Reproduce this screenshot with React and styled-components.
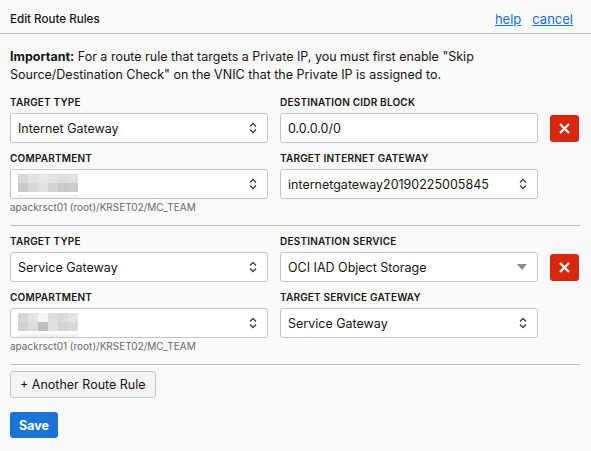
import styled, { createGlobalStyle } from "styled-components";

const Global = createGlobalStyle`
  html, body {
    margin: 0;
    background: #f9f9f9;
  }
  body {
    font-family: Inter, "Liberation Sans", sans-serif;
    color: #161513;
  }
`

const Header = styled.div`
  height: 34px;
  box-sizing: border-box;
  display: flex;
  align-items: center;
  justify-content: space-between;
  padding: 4px 18px 0 10px;
  border-bottom: 1px solid #b9bcc4;
`
const Title = styled.h2`
  margin: 0;
  font-size: 11.6px;
  font-weight: 500;
`
const Links = styled.div`
  display: flex;
  gap: 11px;
`
const Link = styled.a`
  font-size: 13px;
  color: #1a6fd6;
  text-decoration: underline;
  cursor: pointer;
`
const Body = styled.div`
  padding: 0 11px 0 10px;
`
const Notice = styled.p`
  margin: 0;
  padding: 14px 0 3px;
  font-size: 12.5px;
  line-height: 18px;
`
const Rule = styled.div`
  display: grid;
  grid-template-columns: 258px 258px 29px;
  column-gap: 12px;
  padding: 9px 0 12px;
  border-bottom: 1px solid #b9bcc4;
`
const Field = styled.div`
  display: flex;
  flex-direction: column;
  margin-bottom: ${p => (p.$last ? "0" : "9px")};
`
const Label = styled.label`
  font-size: 10px;
  font-weight: 600;
  line-height: 12px;
  letter-spacing: 0.2px;
  margin-bottom: 5px;
`
const SelectBox = styled.div`
  height: 30px;
  box-sizing: border-box;
  border: 1px solid #c2c4c9;
  border-radius: 3px;
  background: #fff;
  display: flex;
  align-items: center;
  justify-content: space-between;
  padding: 0 10px 0 7px;
  font-size: 12.5px;
`
const Hint = styled.div`
  font-size: 10px;
  color: #6b6b6b;
  line-height: 12px;
  margin-top: 2px;
`
const DeleteButton = styled.button`
  width: 29px;
  height: 27px;
  margin-top: 19px;
  border: none;
  border-radius: 3px;
  background: #d8270e;
  display: flex;
  align-items: center;
  justify-content: center;
  padding: 0;
`
const Blur = styled.div`
  display: grid;
  grid-template-columns: repeat(6, 10px);
  grid-auto-rows: 9px;
  padding-bottom: 3px;
  box-shadow: 0 3px 0 #f1f1f1;
`
const Cell = styled.div`
  background: ${p => p.$c};
`
const Actions = styled.div`
  display: flex;
  flex-direction: column;
  align-items: flex-start;
  gap: 14px;
  padding-top: 6px;
`
const AddButton = styled.button`
  font-family: inherit;
  font-size: 12.5px;
  color: #161513;
  background: #f4f4f4;
  border: 1px solid #c2c4c9;
  border-radius: 3px;
  height: 27px;
  padding: 0 9px;
`
const SaveButton = styled.button`
  font-family: inherit;
  font-size: 12.5px;
  font-weight: 700;
  color: #fff;
  background: #1c73d6;
  border: none;
  border-radius: 3px;
  height: 26px;
  padding: 0 9px;
`

const Chevrons = () => (
  <svg width="8" height="12" viewBox="0 0 8 12" fill="none" stroke="#3c3c3c" strokeWidth="1.3">
    <path d="M1 4.5 L4 1.5 L7 4.5" />
    <path d="M1 7.5 L4 10.5 L7 7.5" />
  </svg>
)

const Caret = () => (
  <svg width="10" height="6" viewBox="0 0 10 6">
    <path d="M0 0 H10 L5 6 Z" fill="#8a8a8a" />
  </svg>
)

const Cross = () => (
  <svg width="11" height="11" viewBox="0 0 11 11" stroke="#fff" strokeWidth="2.2">
    <path d="M1 1 L10 10 M10 1 L1 10" />
  </svg>
)

const blurA = [
  "#d9d9d9", "#e2e2e2", "#e6e6e6", "#e3e3e3", "#dcdcdc", "#e1e1e1",
  "#c9c9c9", "#d7d7d7", "#e0e0e0", "#d4d4d4", "#c9c9c9", "#cbcbcb",
]
const blurB = [
  "#d6d6d6", "#e3e3e3", "#f4f4f4", "#dedede", "#dadada", "#e3e3e3",
  "#d0d0d0", "#dcdcdc", "#bdbdbd", "#e0e0e0", "#d3d3d3", "#d8d8d8",
]

// icon: "chevrons" (native select), "caret" (combobox), none (text input)
function Select({ value, icon = "chevrons" }) {
  return (
    <SelectBox>
      <span>{value}</span>
      {icon === "caret" && <Caret />}
      {icon === "chevrons" && <Chevrons />}
    </SelectBox>
  )
}

function Masked({ cells }) {
  return (
    <Blur>
      {cells.map((c, i) => <Cell key={i} $c={c} />)}
    </Blur>
  )
}

function RouteRule({ type, destLabel, dest, destIcon, targetLabel, target, blur }) {
  return (
    <Rule>
      <div>
        <Field>
          <Label>TARGET TYPE</Label>
          <Select value={type} />
        </Field>
        <Field $last>
          <Label>COMPARTMENT</Label>
          <SelectBox>
            <Masked cells={blur} />
            <Chevrons />
          </SelectBox>
          <Hint>apackrsct01 (root)/KRSET02/MC_TEAM</Hint>
        </Field>
      </div>
      <div>
        <Field>
          <Label>{destLabel}</Label>
          <Select value={dest} icon={destIcon} />
        </Field>
        <Field $last>
          <Label>{targetLabel}</Label>
          <Select value={target} />
        </Field>
      </div>
      <DeleteButton aria-label="remove">
        <Cross />
      </DeleteButton>
    </Rule>
  )
}

export default function App() {
  return (
    <>
      <Global />
      <Header>
        <Title>Edit Route Rules</Title>
        <Links>
          <Link>help</Link>
          <Link>cancel</Link>
        </Links>
      </Header>
      <Body>
        <Notice>
          <b>Important:</b> For a route rule that targets a Private IP, you must first enable "Skip
          Source/Destination Check" on the VNIC that the Private IP is assigned to.
        </Notice>
        <RouteRule
          type="Internet Gateway"
          destLabel="DESTINATION CIDR BLOCK"
          dest="0.0.0.0/0"
          destIcon="none"
          targetLabel="TARGET INTERNET GATEWAY"
          target="internetgateway20190225005845"
          blur={blurA}
        />
        <RouteRule
          type="Service Gateway"
          destLabel="DESTINATION SERVICE"
          dest="OCI IAD Object Storage"
          destIcon="caret"
          targetLabel="TARGET SERVICE GATEWAY"
          target="Service Gateway"
          blur={blurB}
        />
        <Actions>
          <AddButton>+ Another Route Rule</AddButton>
          <SaveButton>Save</SaveButton>
        </Actions>
      </Body>
    </>
  )
}
